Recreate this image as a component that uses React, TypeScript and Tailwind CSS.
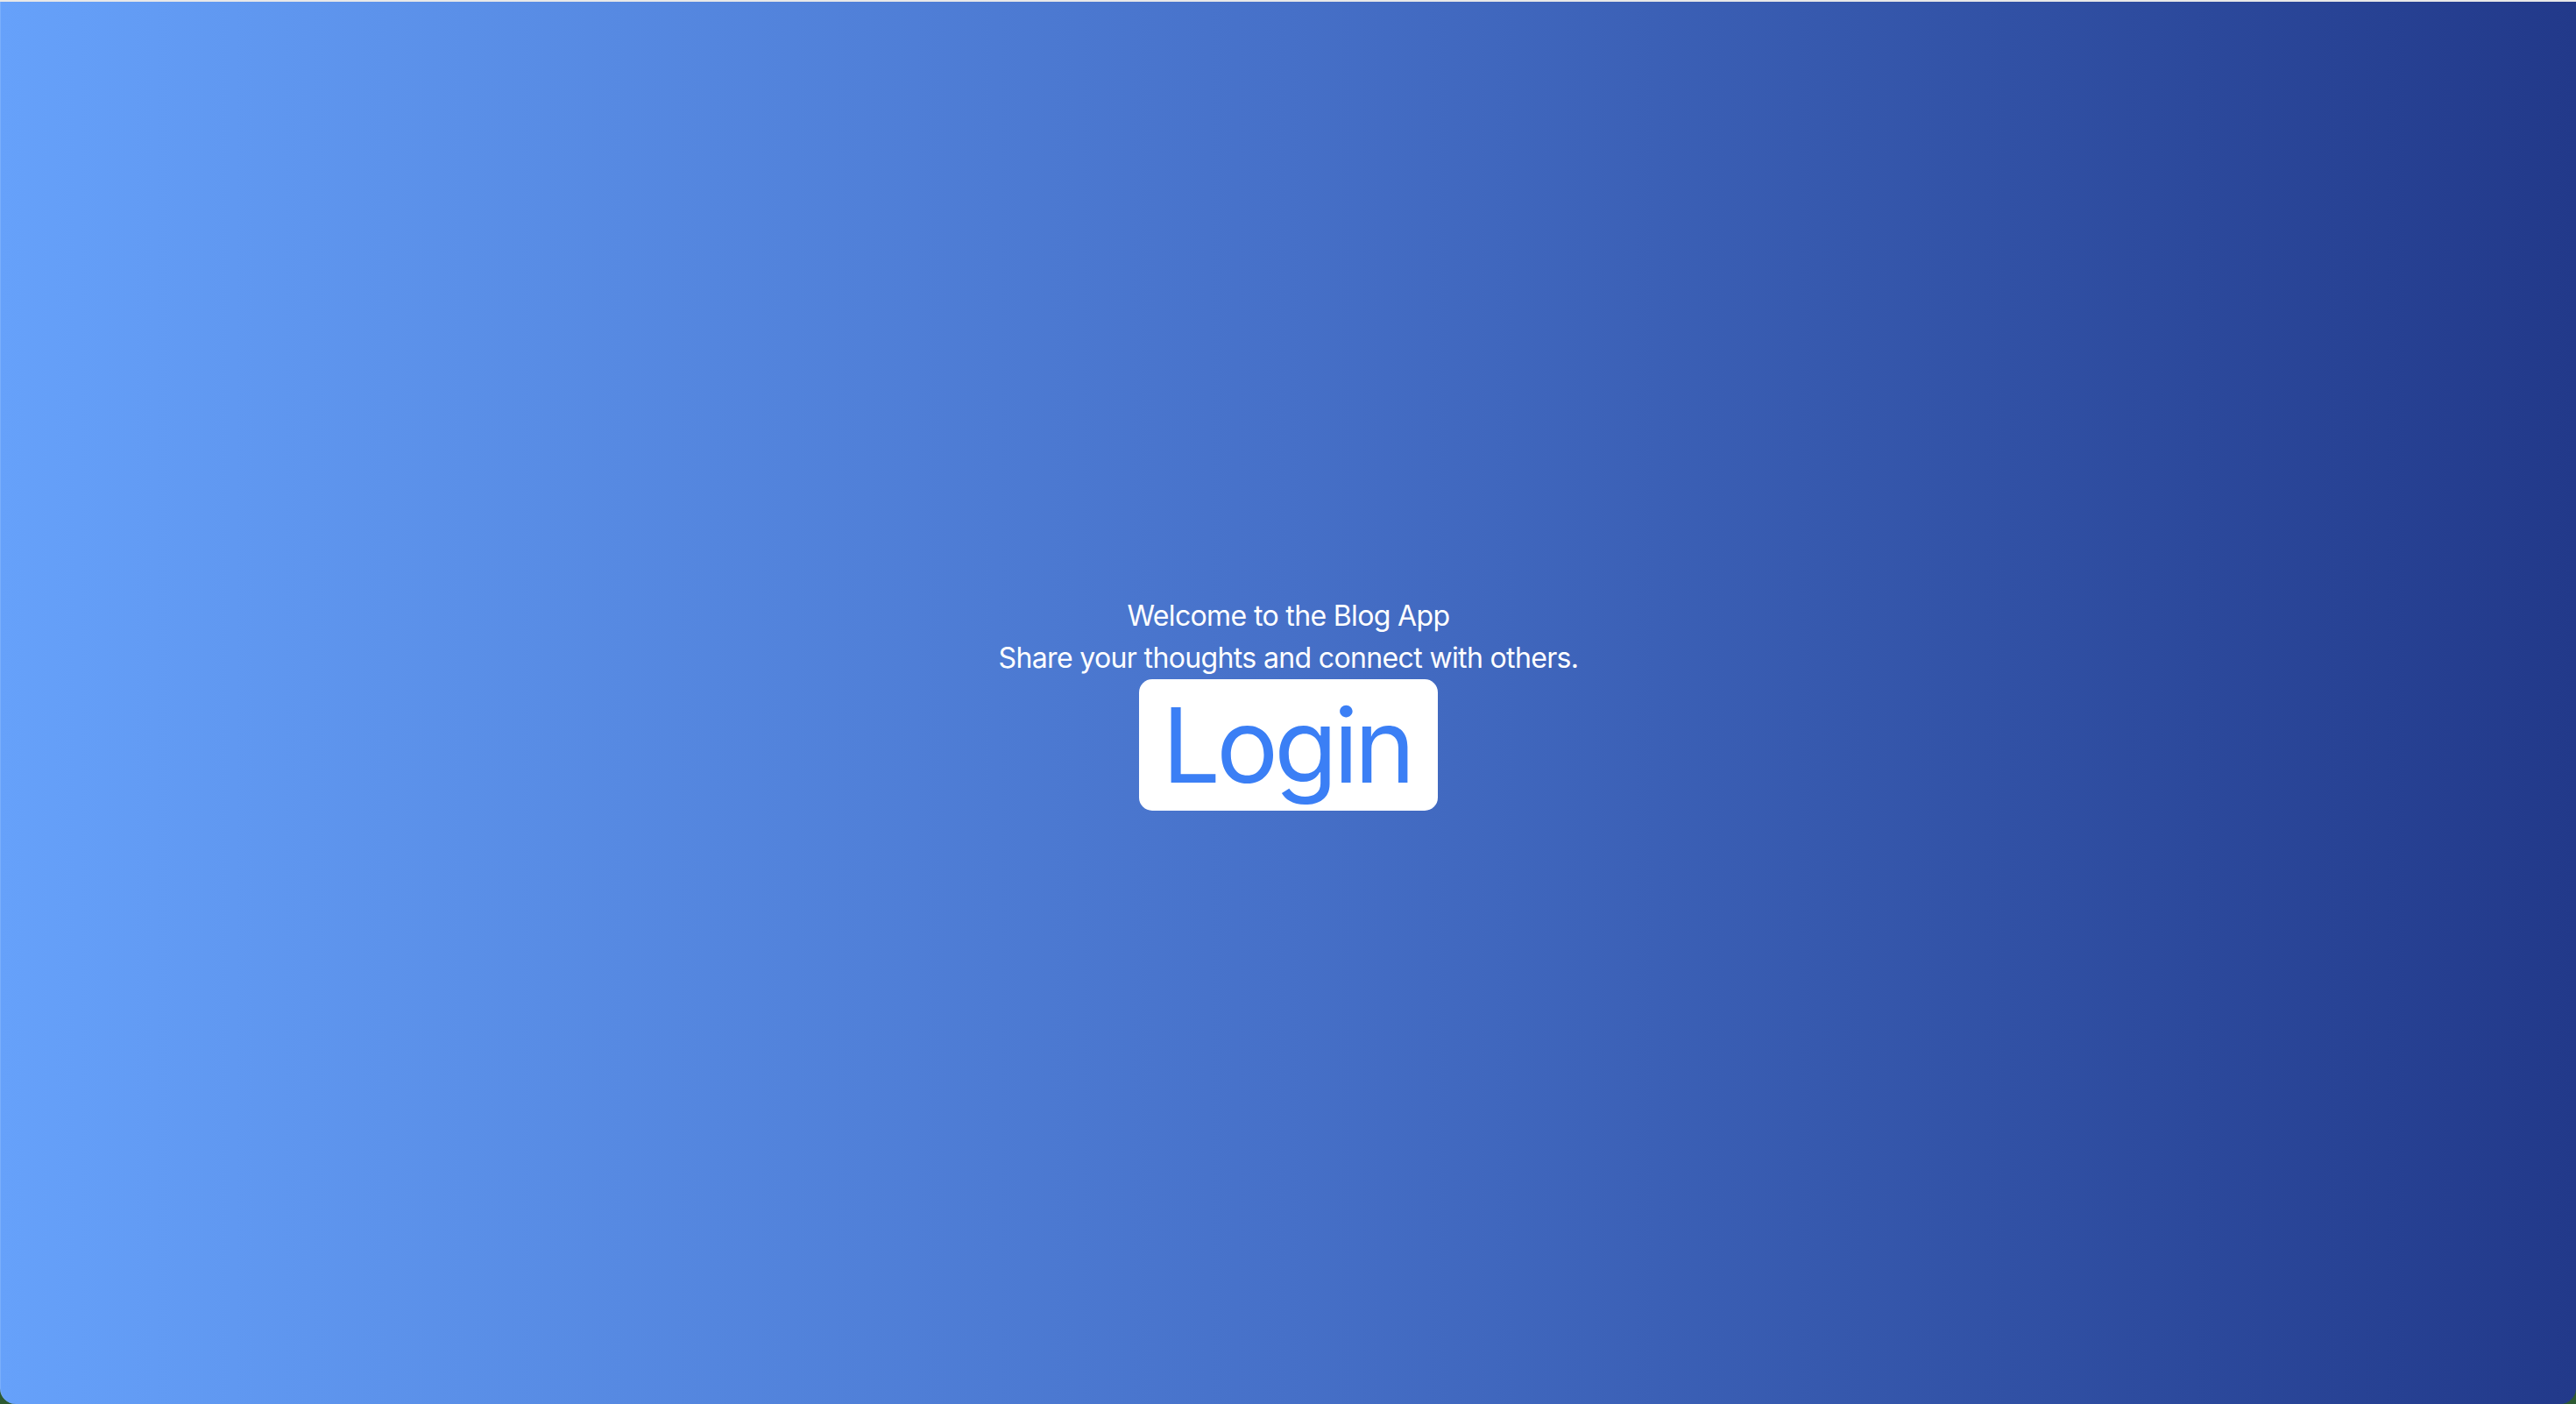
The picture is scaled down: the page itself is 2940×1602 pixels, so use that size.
import React from "react";

function Hero() {
  return (
    <div className="flex flex-col items-center text-white text-[32px] leading-[48px] tracking-[-0.02em]">
      <p>Welcome to the Blog App</p>
      <p>Share your thoughts and connect with others.</p>
      <button className="bg-white text-[#3b7ff5] text-[118px] leading-[118px] tracking-[-0.04em] pl-[26px] pr-[30px] py-4 rounded-[15px]">
        Login
      </button>
    </div>
  );
}

function App() {
  return (
    <div className="w-full h-[1602px] bg-[#2d5a32] flex flex-col font-['Inter',sans-serif]">
      <div className="h-[2px] bg-[#e8e8e8]" />
      <div className="flex-1 flex items-center justify-center rounded-b-[18px] border-l border-[#7aaefb] bg-gradient-to-r from-[#66a1fa] via-[#4670c8] to-[#22398a]">
        <Hero />
      </div>
    </div>
  );
}

export default App;
